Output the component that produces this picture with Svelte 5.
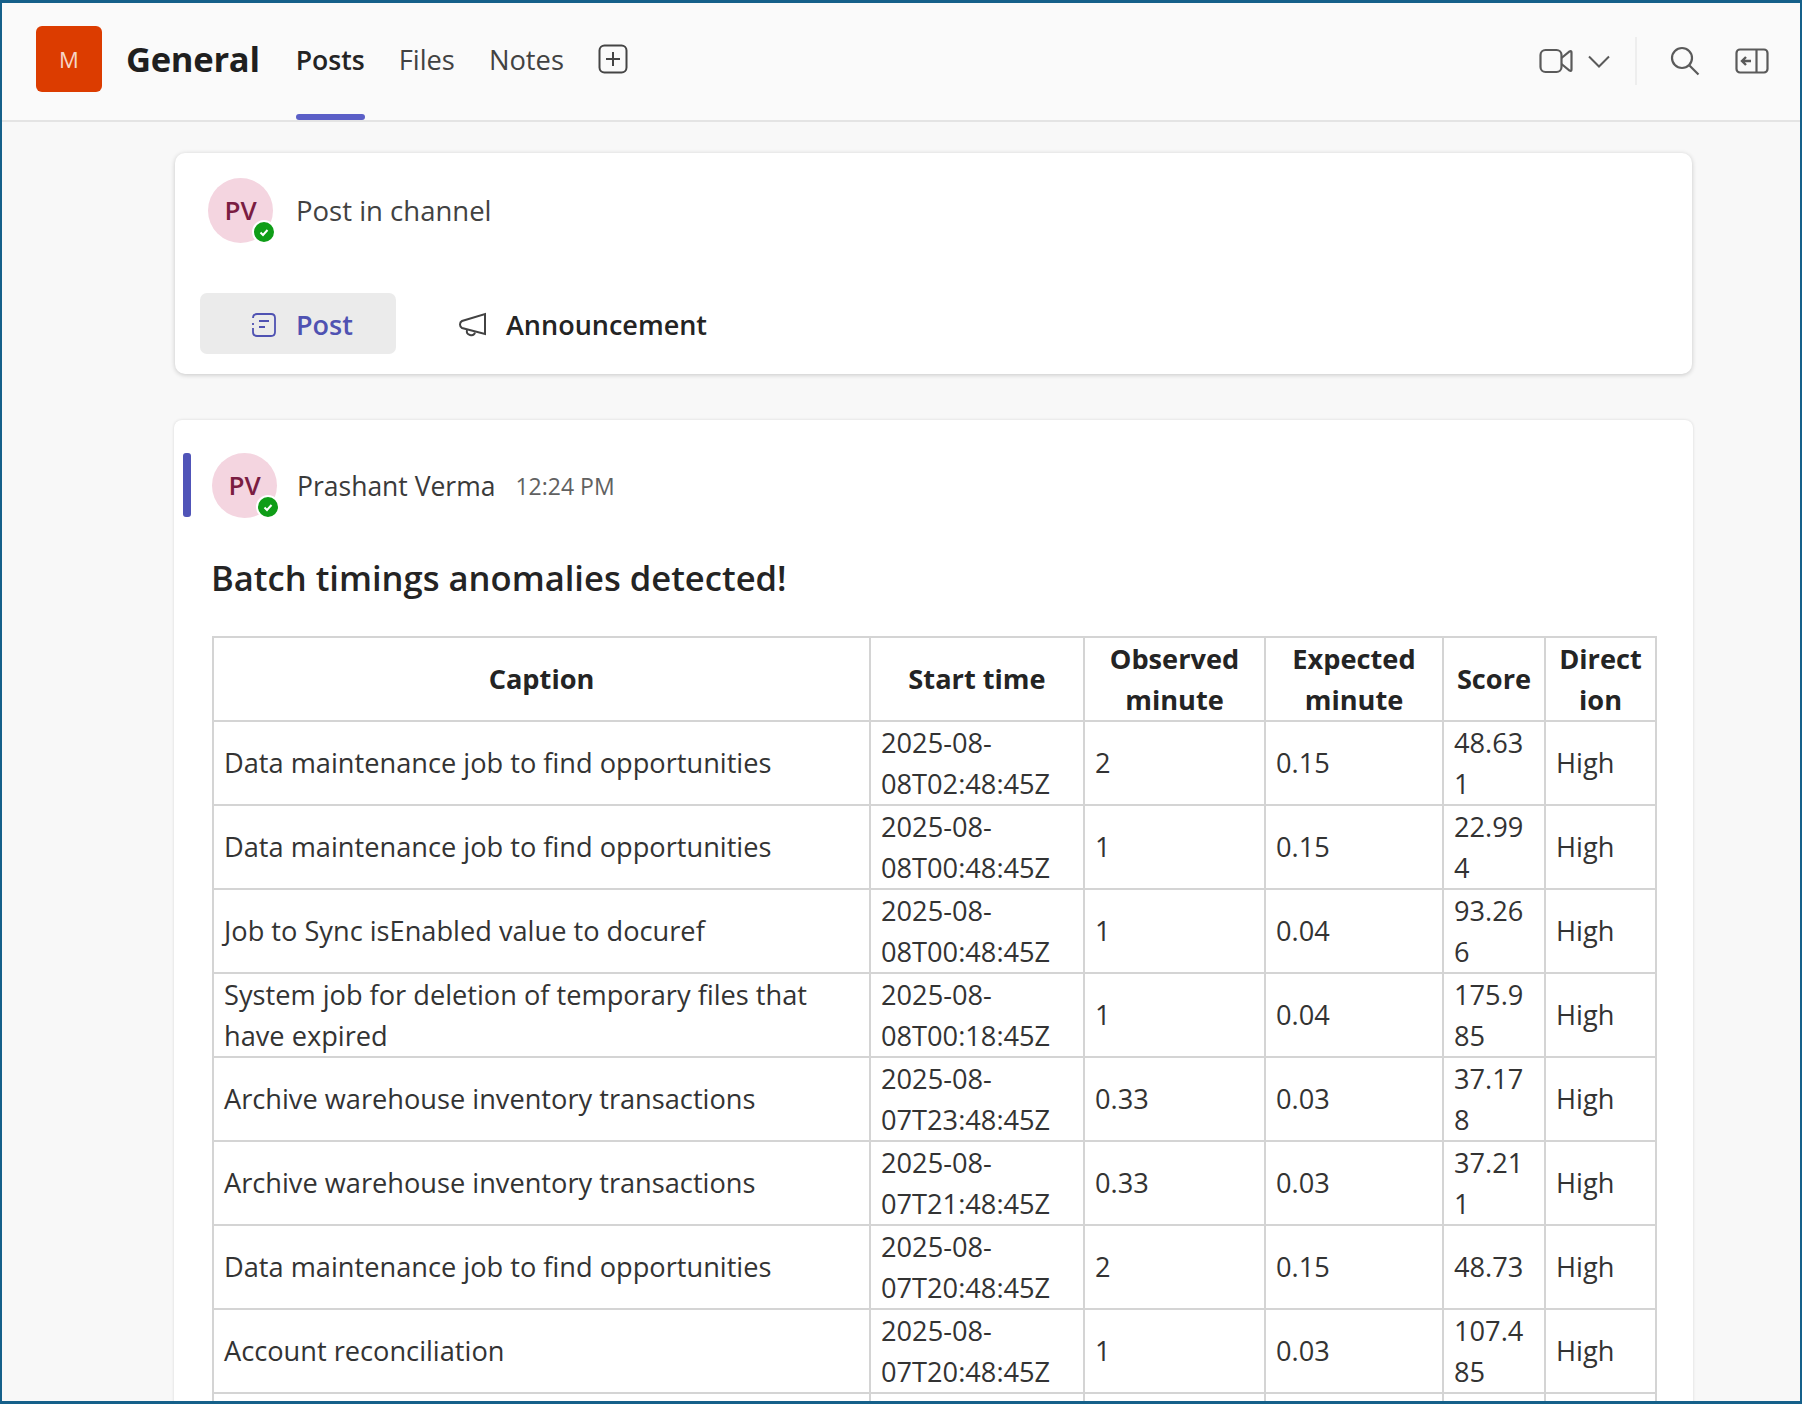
<script>
    let rows = [
        ["Data maintenance job to find opportunities", "2025-08-\n08T02:48:45Z", "2", "0.15", "48.63\n1", "High"],
        ["Data maintenance job to find opportunities", "2025-08-\n08T00:48:45Z", "1", "0.15", "22.99\n4", "High"],
        ["Job to Sync isEnabled value to docuref", "2025-08-\n08T00:48:45Z", "1", "0.04", "93.26\n6", "High"],
        ["System job for deletion of temporary files that\nhave expired", "2025-08-\n08T00:18:45Z", "1", "0.04", "175.9\n85", "High"],
        ["Archive warehouse inventory transactions", "2025-08-\n07T23:48:45Z", "0.33", "0.03", "37.17\n8", "High"],
        ["Archive warehouse inventory transactions", "2025-08-\n07T21:48:45Z", "0.33", "0.03", "37.21\n1", "High"],
        ["Data maintenance job to find opportunities", "2025-08-\n07T20:48:45Z", "2", "0.15", "48.73", "High"],
        ["Account reconciliation", "2025-08-\n07T20:48:45Z", "1", "0.03", "107.4\n85", "High"],
        ["", "", "", "", "", ""]
    ];
</script>

<div class="frame">
    <header class="topbar">
        <div class="logo">M</div>
        <h1 class="channel">General</h1>
        <nav class="tabs">
            <span class="tab active">Posts</span>
            <span class="tab">Files</span>
            <span class="tab">Notes</span>
            <svg class="plus" width="30" height="30" viewBox="0 0 30 30" fill="none" stroke="#444" stroke-width="2">
                <rect x="1.500" y="1.500" width="27" height="27" rx="5"/>
                <path d="M15 8v14M8 15h14"/>
            </svg>
        </nav>
        <div class="actions">
            <svg width="34" height="26" viewBox="0 0 34 26" fill="none" stroke="#5a5a5a" stroke-width="2.200">
                <rect x="1.500" y="2" width="21" height="22" rx="5"/>
                <path d="M22.500 10l8-6.500q2-1 2 1v17q0 2-2 1l-8-6.500"/>
            </svg>
            <svg class="chevron" width="22" height="13" viewBox="0 0 22 13" fill="none" stroke="#5a5a5a" stroke-width="2">
                <path d="M1 1.500l10 10 10-10"/>
            </svg>
            <div class="divider"></div>
            <svg class="search" width="30" height="30" viewBox="0 0 30 30" fill="none" stroke="#5a5a5a" stroke-width="2.200">
                <circle cx="12" cy="12" r="10"/>
                <path d="M19.500 19.500l9 9"/>
            </svg>
            <svg class="panel" width="34" height="26" viewBox="0 0 34 26" fill="none" stroke="#5a5a5a" stroke-width="2.200">
                <rect x="1.500" y="1.500" width="31" height="23" rx="3.500"/>
                <path d="M21.500 1.500v23"/>
                <path d="M16 13H7M11 9l-4 4 4 4" stroke-width="2.400"/>
            </svg>
        </div>
    </header>

    <main class="content">
        <section class="compose">
            <div class="compose-top">
                <div class="avatar">PV
                    <span class="presence">
                        <svg width="12" height="12" viewBox="0 0 12 12" fill="none" stroke="#fff" stroke-width="2"><path d="M2.500 6.500l2.500 2.500 4.500-5"/></svg>
                    </span>
                </div>
                <span class="placeholder">Post in channel</span>
            </div>
            <div class="compose-tabs">
                <button class="post-btn">
                    <svg width="26" height="24" viewBox="0 0 26 24" fill="none" stroke="#4f52b2" stroke-width="1.800">
                        <path d="M3 5q0-4 4-4h14q4 0 4 4v14q0 4-4 4H7q-4 0-4-4v-4M3 10v2"/>
                        <path d="M9 8h10M9 14h6"/>
                    </svg>
                    Post
                </button>
                <button class="announce-btn">
                    <svg width="28" height="26" viewBox="0 0 28 26" fill="none" stroke="#424242" stroke-width="2">
                        <path d="M26 2v20L3 16q-2-1-2-3.500t2-3.500z"/>
                        <path d="M8 18q-1 4 3 5t5-2.500"/>
                    </svg>
                    Announcement
                </button>
            </div>
        </section>

        <article class="message">
            <div class="accent"></div>
            <div class="msg-head">
                <div class="avatar">PV
                    <span class="presence">
                        <svg width="12" height="12" viewBox="0 0 12 12" fill="none" stroke="#fff" stroke-width="2"><path d="M2.500 6.500l2.500 2.500 4.500-5"/></svg>
                    </span>
                </div>
                <span class="author">Prashant Verma</span>
                <span class="time">12:24 PM</span>
            </div>
            <h2 class="title">Batch timings anomalies detected!</h2>
            <table>
                <colgroup>
                    <col style="width:657px">
                    <col style="width:214px">
                    <col style="width:181px">
                    <col style="width:178px">
                    <col style="width:102px">
                    <col style="width:111px">
                </colgroup>
                <thead>
                    <tr>
                        <th>Caption</th>
                        <th>Start time</th>
                        <th>Observed<br>minute</th>
                        <th>Expected<br>minute</th>
                        <th>Score</th>
                        <th>Direct<br>ion</th>
                    </tr>
                </thead>
                <tbody>
                    {#each rows as row}
                        <tr>
                            {#each row as cell}
                                <td>{cell}</td>
                            {/each}
                        </tr>
                    {/each}
                </tbody>
            </table>
        </article>
    </main>
</div>

<style>
    :global(body) {
        margin: 0;
        background: #f8f8f8;
    }
    .frame {
        box-sizing: border-box;
        width: 1802px;
        height: 1404px;
        overflow: hidden;
        border: 2px solid #15608a;
        border-top-width: 3px;
        border-bottom-width: 3px;
        background: #f8f8f8;
        font-family: "Open Sans", "Liberation Sans", sans-serif;
        color: #242424;
    }
    .topbar {
        box-sizing: border-box;
        height: 119px;
        display: flex;
        align-items: flex-start;
        padding-left: 34px;
        background: #fafafa;
        border-bottom: 2px solid #e4e4e4;
    }
    .logo {
        width: 66px;
        height: 66px;
        margin-top: 23px;
        border-radius: 6px;
        background: #dc3c00;
        color: #f6d5c6;
        font-size: 22px;
        display: flex;
        align-items: center;
        justify-content: center;
    }
    .channel {
        margin: 0 0 0 24px;
        padding-top: 33px;
        font-size: 34.600px;
        line-height: 46px;
        font-weight: 700;
        color: #1f1f1f;
        letter-spacing: -0.3px;
    }
    .tabs {
        display: flex;
        align-items: flex-start;
        gap: 34px;
        margin-left: 36px;
        height: 117px;
    }
    .tab {
        position: relative;
        height: 117px;
        box-sizing: border-box;
        padding-top: 39px;
        font-size: 27.300px;
        line-height: 36px;
        color: #424242;
    }
    .tab.active {
        color: #242424;
        font-size: 26.600px;
        font-weight: 600;
    }
    .tab.active::after {
        content: "";
        position: absolute;
        left: 0;
        right: 0;
        bottom: 0;
        height: 6px;
        border-radius: 3px;
        background: #5b5fc7;
    }
    .plus {
        margin-top: 41px;
    }
    .actions {
        margin-left: auto;
        display: flex;
        align-items: center;
        height: 94px;
        padding-top: 22px;
        box-sizing: border-box;
        padding-right: 31px;
    }
    .chevron {
        margin-left: 15px;
    }
    .divider {
        width: 2px;
        height: 48px;
        margin: 0 33px 0 25px;
        background: #eeeeee;
    }
    .panel {
        margin-left: 35px;
    }
    .content {
        padding: 31px 0 0 172px;
    }
    .compose {
        box-sizing: border-box;
        width: 1517px;
        height: 221px;
        margin-left: 1px;
        background: #fff;
        border-radius: 10px;
        box-shadow: 0 1px 5px rgba(0, 0, 0, 0.2);
        padding: 25px 0 0 25px;
    }
    .compose-top {
        display: flex;
        align-items: flex-start;
        padding-left: 8px;
    }
    .avatar {
        position: relative;
        flex: none;
        width: 65px;
        height: 65px;
        border-radius: 50%;
        background: #f4d5e0;
        color: #7a1d42;
        font-size: 26px;
        font-weight: 600;
        line-height: 65px;
        text-align: center;
    }
    .presence {
        position: absolute;
        right: -3px;
        bottom: -1px;
        width: 20px;
        height: 20px;
        border-radius: 50%;
        background: #0f9d17;
        border: 2px solid #fff;
        display: flex;
        align-items: center;
        justify-content: center;
    }
    .placeholder {
        margin-left: 23px;
        font-size: 27.500px;
        line-height: 66px;
        color: #424242;
    }
    .compose-tabs {
        display: flex;
        margin-top: 49px;
    }
    button {
        font-family: inherit;
        border: 0;
        background: none;
        padding: 0;
        display: flex;
        align-items: center;
    }
    .post-btn {
        box-sizing: border-box;
        width: 196px;
        height: 61px;
        padding: 2px 0 0 50px;
        gap: 20px;
        background: #ebebeb;
        border-radius: 7px;
        font-size: 27px;
        font-weight: 600;
        color: #4f52b2;
    }
    .announce-btn {
        margin-left: 63px;
        padding-top: 2px;
        gap: 19px;
        font-size: 27px;
        font-weight: 600;
        color: #242424;
    }
    .message {
        position: relative;
        box-sizing: border-box;
        width: 1519px;
        margin-top: 46px;
        padding: 33px 0 0 38px;
        background: #fff;
        border-radius: 8px 8px 0 0;
        box-shadow: 0 0 3px rgba(0, 0, 0, 0.14);
    }
    .accent {
        position: absolute;
        left: 9px;
        top: 33px;
        width: 8px;
        height: 64px;
        border-radius: 3px;
        background: #5054b8;
    }
    .msg-head {
        display: flex;
        align-items: center;
    }
    .author {
        margin-left: 20px;
        font-size: 26.500px;
        color: #3a3a3a;
    }
    .time {
        margin-left: 20px;
        font-size: 23px;
        color: #616161;
    }
    .title {
        margin: 36px 0 0 -1px;
        font-size: 34.600px;
        line-height: 48px;
        font-weight: 600;
        color: #242424;
    }
    table {
        margin-top: 34px;
        width: 1443px;
        table-layout: fixed;
        border-collapse: collapse;
        font-size: 27.200px;
        line-height: 40.500px;
    }
    th, td {
        border: 2px solid #d4d4d4;
        padding: 1px 10px 0;
        white-space: pre-line;
        text-align: left;
        color: #333;
        font-weight: 400;
        height: 81px;
        box-sizing: content-box;
    }
    th {
        text-align: center;
        font-weight: 700;
        color: #242424;
    }
</style>
